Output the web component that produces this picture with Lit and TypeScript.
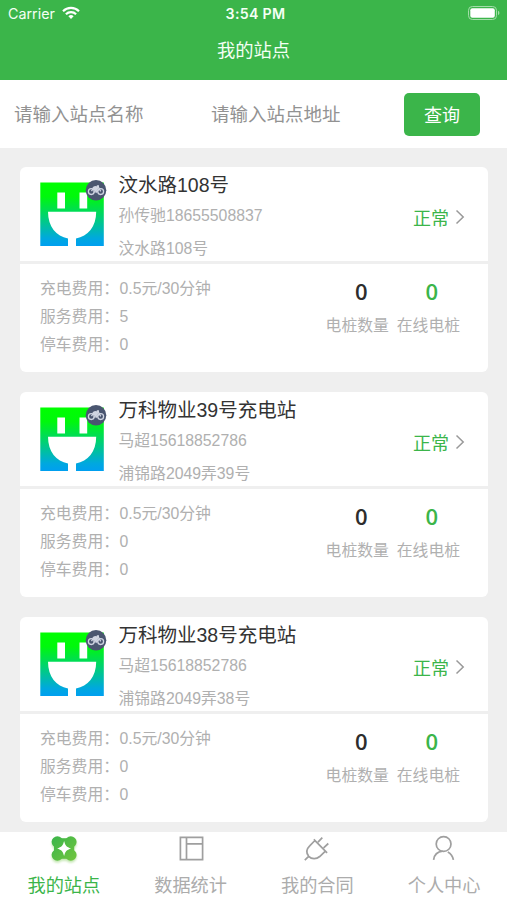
import { LitElement, html, svg, css } from "lit";
import { customElement, property } from "lit/decorators.js";
import { classMap } from "lit/directives/class-map.js";

interface Station {
  name: string;
  contact: string;
  address: string;
  charge: string;
  service: string;
  parking: string;
  total: number;
  online: number;
}

const STATIONS: Station[] = [
  { name: "汶水路108号", contact: "孙传驰18655508837", address: "汶水路108号", charge: "0.5元/30分钟", service: "5", parking: "0", total: 0, online: 0 },
  { name: "万科物业39号充电站", contact: "马超15618852786", address: "浦锦路2049弄39号", charge: "0.5元/30分钟", service: "0", parking: "0", total: 0, online: 0 },
  { name: "万科物业38号充电站", contact: "马超15618852786", address: "浦锦路2049弄38号", charge: "0.5元/30分钟", service: "0", parking: "0", total: 0, online: 0 },
];

const TABS = [
  {
    label: "我的站点",
    icon: svg`
      <defs>
        <linearGradient id="leaf" gradientUnits="userSpaceOnUse" x1="2" y1="2" x2="27" y2="27">
          <stop offset="0" stop-color="#3bb54a"/><stop offset="1" stop-color="#74c63e"/>
        </linearGradient>
      </defs>
      <g fill="url(#leaf)">
        <circle cx="7.400" cy="7" r="5.800"/><circle cx="20.800" cy="7" r="5.800"/>
        <circle cx="7.400" cy="20" r="5.800"/><circle cx="20.800" cy="20" r="5.800"/>
        <path d="M4 3.200h20.200v20.600H4z"/>
      </g>
      <path fill="#fff" d="M14.100 6c1.200 4.600 2.400 6 7 7.500-4.600 1.500-5.800 2.900-7 7.500-1.200-4.600-2.400-6-7-7.500 4.600-1.500 5.800-2.900 7-7.500z"/>`,
  },
  {
    label: "数据统计",
    icon: svg`<path class="line" d="M3.400 2.400h22.200v22.200H3.400zM9.500 2.400v22.200M9.500 8.900h16"/>`,
  },
  {
    label: "我的合同",
    icon: svg`<path class="line" d="M10.800 4.400l13.300 13.400M11.900 5.500L6.700 10.800c-3.600 3.500-3.500 7.300-1 10.500 3 3 7.600 3.100 11 .2l5.700-5.400M15 7.200l4.300-4.600M20.600 12.800l4.700-4.300M5.900 21.200l-4.100 4"/>`,
  },
  {
    label: "个人中心",
    icon: svg`<circle class="line" cx="13.600" cy="9" r="7.400"/><path class="line" d="M3.600 24.800c.6-4.600 3.800-8 9-8.600M17.800 17c2.900 1.600 4.900 4 5.600 7.800"/>`,
  },
];

@customElement("status-bar")
class StatusBar extends LitElement {
  static styles = css`
    :host { display: grid; grid-template-columns: 1fr auto 1fr; align-items: center; height: 28px; padding: 0 7px 0 8px; box-sizing: border-box; color: #f4fff4; font: 14.300px/28px Inter, sans-serif; }
    .left { display: flex; align-items: center; gap: 7px; }
    .left svg { margin-top: -2px; }
    .time { font-weight: 600; font-size: 14.200px; letter-spacing: 0.300px; padding-left: 3px; }
    .battery { justify-self: end; margin-top: -2px; }
    svg { display: block; }
  `;
  render() {
    return html`
      <div class="left">
        <span>Carrier</span>
        <svg width="18" height="14" viewBox="0 0 18 14" fill="none" stroke="#fff" stroke-width="2.200">
          <path d="M1 5.200a11.500 11.500 0 0 1 16 0M3.900 8.300a7.300 7.300 0 0 1 10.200 0"/>
          <path d="M9 13l-2.600-2.700a3.700 3.700 0 0 1 5.200 0z" fill="#fff" stroke="none"/>
        </svg>
      </div>
      <div class="time">3:54 PM</div>
      <svg class="battery" width="32" height="14" viewBox="0 0 32 14">
        <rect x=".5" y=".5" width="28" height="13" rx="3.800" fill="none" stroke="#a3dda9"/>
        <rect x="2.300" y="2.300" width="24.500" height="9.400" rx="2" fill="#fff"/>
        <path d="M30 4.800a2.400 2.400 0 0 1 0 4.400z" fill="#a3dda9"/>
      </svg>`;
  }
}

@customElement("station-card")
class StationCard extends LitElement {
  @property({ attribute: false }) station!: Station;
  static styles = css`
    :host { display: block; height: 205px; border-radius: 6px; background: #fff; overflow: hidden; color: #b0b0b0; font-size: 15.800px; }
    .head { display: flex; box-sizing: border-box; height: 97px; padding-left: 20px; padding-right: 23px; border-bottom: 3px solid #efefef; }
    .logo { flex: none; width: 68px; height: 70px; margin-top: 11px; }
    .info { flex: 1; margin: 1px 0 0 10.500px; white-space: nowrap; }
    .name { height: 34px; line-height: 34px; font-size: 19.500px; color: #333; }
    .contact { height: 28px; line-height: 28px; }
    .address { height: 37px; line-height: 37px; }
    .status { display: flex; align-items: center; gap: 6px; height: 100px; font-size: 18px; color: #3bb54a; }
    .foot { display: flex; justify-content: space-between; padding: 11px 28px 0 20px; }
    .fee { display: flex; height: 28px; line-height: 28px; }
    .fee dt { width: 79.500px; white-space: nowrap; }
    dl, dd { margin: 0; }
    .counts { display: flex; gap: 8px; text-align: center; }
    .value { height: 35px; font: 600 22px/33px "Open Sans", sans-serif; color: #2d2d2d; }
    .online { color: #3bb54a; }
    .caption { line-height: 32px; }
    .value.shift { padding-left: 8px; }
    .value.online { padding-left: 7px; }
  `;
  render() {
    const s = this.station;
    const fees = [["充电费用：", s.charge], ["服务费用：", s.service], ["停车费用：", s.parking]];
    return html`
      <div class="head">
        <svg class="logo" viewBox="0 0 68 70">
          <defs>
            <linearGradient id="g" x1="0" y1="0" x2="0" y2="1">
              <stop offset="0" stop-color="#00ff00"/><stop offset=".22" stop-color="#00f80c"/>
              <stop offset=".88" stop-color="#00a8df"/><stop offset="1" stop-color="#009ff0"/>
            </linearGradient>
          </defs>
          <path fill="url(#g)" d="M.3 4.600h63.500v63.500H.3z"/>
          <path fill="#fff" d="M17.300 14.600H25v15.800h-7.700zM39.500 14.600h7.700v15.800h-7.700zM8 33.800h48.200c0 15-8.300 24.500-20.200 26.600v7.700h-8v-7.700C16.300 58.300 8 48.800 8 33.800z"/>
          <circle cx="56" cy="12.200" r="10.300" fill="#4a5670"/>
          <g fill="none" stroke="#d0d5e2" stroke-width="1.300">
            <circle cx="51.300" cy="13.600" r="2.900"/><circle cx="60.700" cy="13.600" r="2.900"/>
            <path d="M51.500 13.200l2.600-4h4.300l2.300 4.200M54 9.200l2.800 4.800 2.200-3.700M56.800 8h2.200M53.500 13.800h4"/>
          </g>
          <path fill="#d0d5e2" d="M52.500 9.200l3.200-1.200 2.800 1.400-1.200 3.200-2.500.6z"/>
        </svg>
        <div class="info">
          <div class="name">${s.name}</div>
          <div class="contact">${s.contact}</div>
          <div class="address">${s.address}</div>
        </div>
        <div class="status">
          正常
          <svg width="10" height="16" viewBox="0 0 10 16" fill="none" stroke="#999" stroke-width="1.500"><path d="M1.500 1.500L8.200 8l-6.700 6.500"/></svg>
        </div>
      </div>
      <div class="foot">
        <dl>${fees.map(([k, v]) => html`<div class="fee"><dt>${k}</dt><dd>${v}</dd></div>`)}</dl>
        <div class="counts">
          <div><div class="value shift">${s.total}</div><div class="caption">电桩数量</div></div>
          <div><div class="value online">${s.online}</div><div class="caption">在线电桩</div></div>
        </div>
      </div>`;
  }
}

@customElement("app-root")
class AppRoot extends LitElement {
  static styles = css`
    :host { display: flex; flex-direction: column; height: 900px; overflow: hidden; background: #efefef; font-family: "Liberation Sans", "Noto Sans CJK SC", sans-serif; }
    header { flex: none; height: 80px; background: #3bb54a; }
    h1 { margin: 0; height: 45px; line-height: 45px; text-align: center; font-size: 18.300px; font-weight: 400; color: #f4fff4; }
    .search { flex: none; display: flex; align-items: center; box-sizing: border-box; height: 68px; padding: 0 28px 0 14px; background: #fff; font-size: 18.500px; color: #929292; }
    .field { width: 197px; margin-top: -2px; white-space: nowrap; flex: none; }
    button { margin: 0 0 0 -4px; width: 76px; height: 43px; padding: 0; border: 0; border-radius: 5px; background: #3bb54a; color: #fff; font: inherit; font-size: 18px; flex: none; }
    .list { flex: 1; min-height: 0; display: flex; flex-direction: column; gap: 20px; padding: 19px 19px 0 20px; overflow: hidden; }
    station-card { flex: none; }
    nav { flex: none; display: grid; grid-template-columns: repeat(4, 1fr); height: 68px; background: #fff; }
    .tab { display: flex; flex-direction: column; align-items: center; padding: 3px 0 0 1px; font-size: 18.200px; color: #acacac; }
    .tab span { line-height: 46px; }
    .tab svg { flex: none; width: 28px; height: 28px; }
    .line { fill: none; stroke: #9f9f9f; stroke-width: 1.700; }
    .active { color: #3bb54a; }
    .active svg { filter: drop-shadow(0 2px 1px #6cc23f66); }
  `;
  render() {
    return html`
      <header><status-bar></status-bar><h1>我的站点</h1></header>
      <div class="search">
        <div class="field">请输入站点名称</div>
        <div class="field">请输入站点地址</div>
        <button>查询</button>
      </div>
      <div class="list">${STATIONS.map((s) => html`<station-card .station=${s}></station-card>`)}</div>
      <nav>
        ${TABS.map((t, i) => html`
          <div class=${classMap({ tab: true, active: i === 0 })}>
            <svg viewBox="0 0 28 28">${t.icon}</svg><span>${t.label}</span>
          </div>`)}
      </nav>`;
  }
}
